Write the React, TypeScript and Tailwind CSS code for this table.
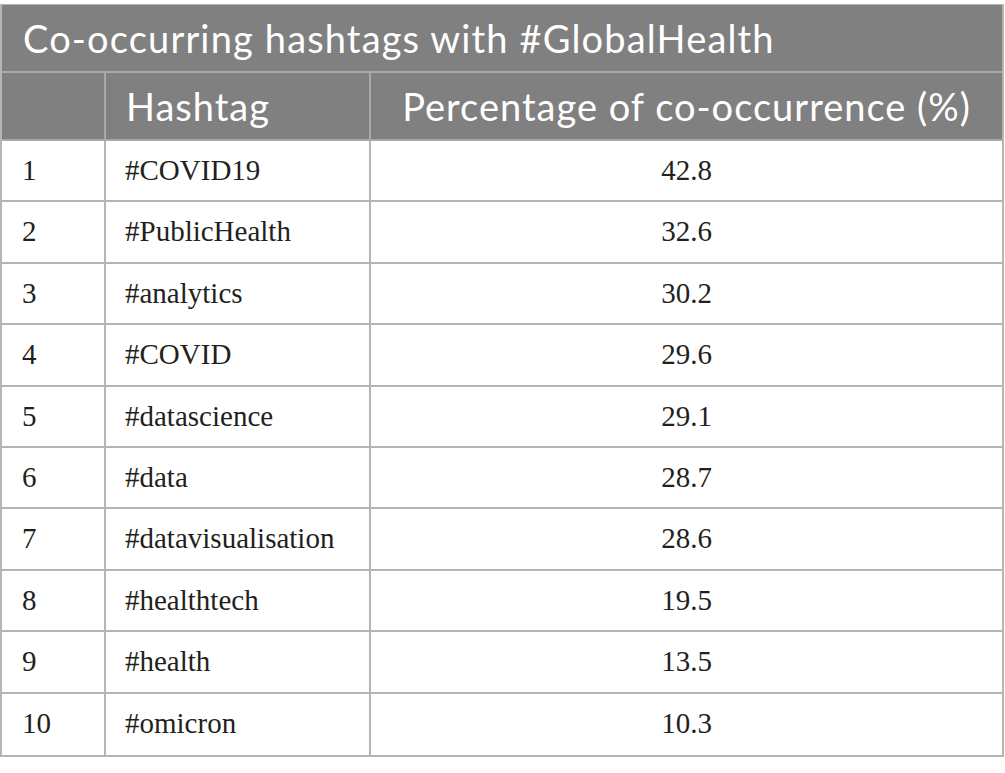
import React from "react";

const rows: [string, string, string][] = [
  ["1", "#COVID19", "42.8"],
  ["2", "#PublicHealth", "32.6"],
  ["3", "#analytics", "30.2"],
  ["4", "#COVID", "29.6"],
  ["5", "#datascience", "29.1"],
  ["6", "#data", "28.7"],
  ["7", "#datavisualisation", "28.6"],
  ["8", "#healthtech", "19.5"],
  ["9", "#health", "13.5"],
  ["10", "#omicron", "10.3"],
];

export default function App() {
  return (
    <div className="w-[1005px] h-[773px] bg-white pt-[4px]">
      <div className="w-[1004px] border-l-2 border-r-2 border-t border-b-2 border-[#b5b5b5]">
        <div className="h-[68px] bg-[#808080] border-b-2 border-[#a9a9a9] flex items-center pl-[21px] text-white text-[38px] font-['Lato',sans-serif] tracking-[1.15px]">
          Co-occurring hashtags with #GlobalHealth
        </div>
        <div className="h-[68px] bg-[#808080] border-b-2 border-[#a9a9a9] grid grid-cols-[104px_265px_1fr] text-white text-[38px] font-['Lato',sans-serif] tracking-[1px]">
          <div className="border-r-2 border-[#a9a9a9]"></div>
          <div className="border-r-2 border-[#a9a9a9] flex items-center pl-[20px]">Hashtag</div>
          <div className="flex items-center justify-center">Percentage of co-occurrence (%)</div>
        </div>
        {rows.map((r, i) => (
          <div
            key={i}
            className={`h-[61.4px] grid grid-cols-[104px_265px_1fr] text-[#231f20] text-[29px] font-['Liberation_Serif',serif] ${i < rows.length - 1 ? "border-b-2 border-[#b5b5b5]" : ""}`}
          >
            <div className="border-r-2 border-[#b5b5b5] flex items-center pl-[20px]">{r[0]}</div>
            <div className="border-r-2 border-[#b5b5b5] flex items-center pl-[19px]">{r[1]}</div>
            <div className="flex items-center justify-center">{r[2]}</div>
          </div>
        ))}
      </div>
    </div>
  );
}
